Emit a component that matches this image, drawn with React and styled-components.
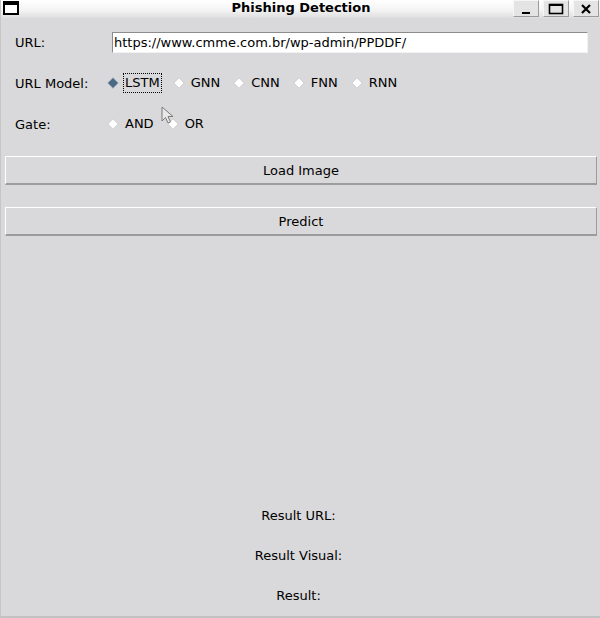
import React from "react";
import styled, { createGlobalStyle } from "styled-components";

const MODELS = ["LSTM", "GNN", "CNN", "FNN", "RNN"];
const GATES = ["AND", "OR"];
const RESULTS = ["Result URL:", "Result Visual:", "Result:"];

const GlobalStyle = createGlobalStyle`
  html, body {
    margin: 0;
    padding: 0;
    background: #d9d9d9;
  }
  body {
    font-family: "DejaVu Sans", "Liberation Sans", sans-serif;
    font-size: 13px;
    color: #000;
  }
`;

const Diamond = ({ selected }) => (
  <DiamondSvg width="12" height="12" viewBox="0 0 12 12">
    <polygon
      points="6,0.8 11.2,6 6,11.2 0.8,6"
      fill={selected ? "#4a6984" : "#ffffff"}
      stroke={selected ? "#8ea0b3" : "#c8c8c8"}
      strokeWidth="0.8"
    />
  </DiamondSvg>
);

const RadioGroup = ({ options, value }) => (
  <Radios>
    {options.map((opt) => (
      <RadioItem key={opt}>
        <Diamond selected={opt === value} />
        <RadioLabel $focused={opt === value}>{opt}</RadioLabel>
      </RadioItem>
    ))}
  </Radios>
);

const App = () => {
  return (
    <>
      <GlobalStyle />
      <Window>
        <TitleBar>
          <WindowIcon />
          <Title>Phishing Detection</Title>
          <TitleButtons>
            <TitleButton>
              <svg width="12" height="12" viewBox="0 0 12 12">
                <rect x="2" y="9" width="8" height="2" fill="#000" />
              </svg>
            </TitleButton>
            <TitleButton>
              <svg width="16" height="12" viewBox="0 0 16 12">
                <rect x="1.5" y="1.5" width="13" height="9" fill="none" stroke="#000" strokeWidth="1.6" />
                <rect x="1" y="1" width="14" height="2" fill="#000" />
              </svg>
            </TitleButton>
            <TitleButton>
              <svg width="12" height="12" viewBox="0 0 12 12">
                <path d="M2 2 L10 10 M10 2 L2 10" stroke="#000" strokeWidth="2.2" />
              </svg>
            </TitleButton>
          </TitleButtons>
        </TitleBar>

        <Body>
          <Form>
            <Row>
              <Label>URL:</Label>
              <Entry defaultValue="https://www.cmme.com.br/wp-admin/PPDDF/" />
            </Row>
            <Row>
              <Label>URL Model:</Label>
              <RadioGroup options={MODELS} value="LSTM" />
            </Row>
            <Row>
              <Label>Gate:</Label>
              <RadioGroup options={GATES} value={null} />
            </Row>
          </Form>

          <Buttons>
            <Button>Load Image</Button>
            <Button>Predict</Button>
          </Buttons>

          <Results>
            {RESULTS.map((r) => (
              <ResultLine key={r}>{r}</ResultLine>
            ))}
          </Results>
        </Body>

        <Cursor width="16" height="20" viewBox="0 0 16 20">
          <path
            d="M1 1 L1 15 L4.5 11.5 L7 17 L9.5 16 L7 10.5 L12 10.5 Z"
            fill="#e8e8e8"
            stroke="#7a7a7a"
            strokeWidth="1"
            strokeLinejoin="round"
          />
        </Cursor>
      </Window>
    </>
  );
};

const Window = styled.div`
  position: relative;
  width: 600px;
  height: 618px;
  display: flex;
  flex-direction: column;
  background: #d9d8da;
  box-sizing: border-box;
  border-left: 1px solid #c6c6c6;
  border-bottom: 2px solid #c2c2c2;
  overflow: hidden;
`;

const TitleBar = styled.div`
  height: 18px;
  flex: none;
  display: flex;
  align-items: center;
  background: linear-gradient(#ffffff 0%, #f4f4f4 55%, #dedede 100%);
`;

const WindowIcon = styled.div`
  width: 16px;
  height: 14px;
  margin: 0 0 2px 2px;
  box-sizing: border-box;
  border: 2px solid #000;
  border-top-width: 4px;
  background: #fff;
`;

const Title = styled.div`
  flex: 1;
  text-align: center;
  font-weight: bold;
  font-size: 13px;
  line-height: 16px;
  margin: 0 0 3px 0;
  padding-left: 70px;
`;

const TitleButtons = styled.div`
  display: flex;
  gap: 4px;
  align-self: flex-start;
  margin-right: 1px;
`;

const TitleButton = styled.div`
  width: 26px;
  height: 17px;
  box-sizing: border-box;
  display: flex;
  align-items: center;
  justify-content: center;
  background: #e4e4e4;
  border: 1px solid #9a9a9a;
  border-top-color: #f6f6f6;
  border-left-color: #f6f6f6;
`;

const Body = styled.div`
  flex: 1;
  display: flex;
  flex-direction: column;
`;

const Form = styled.div`
  display: flex;
  flex-direction: column;
  gap: 19px;
  padding: 13px 12px 0 14px;
`;

const Row = styled.div`
  display: flex;
  align-items: center;
  height: 22px;
`;

const Label = styled.div`
  width: 97px;
  flex: none;
`;

const Entry = styled.input`
  flex: 1;
  height: 21px;
  box-sizing: border-box;
  margin: 0;
  padding: 0 1px;
  font-family: "DejaVu Sans", "Liberation Sans", sans-serif;
  font-size: 13px;
  color: #000;
  background: #fff;
  border: 1px solid #f2f2f2;
  border-top-color: #8c8c8c;
  border-left-color: #8c8c8c;
  outline: none;
`;

const Radios = styled.div`
  display: flex;
  align-items: center;
  gap: 11px;
  margin-left: -5px;
`;

const RadioItem = styled.div`
  display: flex;
  align-items: center;
  gap: 4px;
`;

const DiamondSvg = styled.svg`
  display: block;
  flex: none;
`;

const RadioLabel = styled.span`
  padding: 1px 1px;
  line-height: 16px;
  border: 1px dotted ${(p) => (p.$focused ? "#000" : "transparent")};
`;

const Buttons = styled.div`
  display: flex;
  flex-direction: column;
  gap: 22px;
  padding: 21px 3px 0 4px;
`;

const Button = styled.div`
  height: 29px;
  box-sizing: border-box;
  display: flex;
  align-items: center;
  justify-content: center;
  background: #d9d8da;
  border-top: 1px solid #ffffff;
  border-left: 1px solid #ffffff;
  border-right: 1px solid #9c9c9c;
  border-bottom: 2px solid #9c9c9c;
`;

const Results = styled.div`
  margin-top: auto;
  display: flex;
  flex-direction: column;
  align-items: center;
  gap: 24px;
  padding: 0 4px 12px 0;
`;

const ResultLine = styled.div`
  line-height: 16px;
`;

const Cursor = styled.svg`
  position: absolute;
  left: 160px;
  top: 106px;
`;

export default App;
